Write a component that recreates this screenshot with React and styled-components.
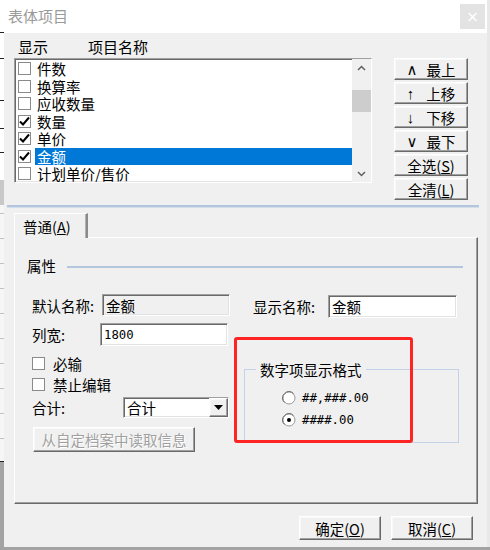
import React from 'react';
import styled, { createGlobalStyle } from 'styled-components';

const GlobalStyle = createGlobalStyle`
  html, body {
    margin: 0;
    padding: 0;
    background: #a3a3a3;
  }
  * {
    box-sizing: border-box;
  }
`;

const cjk = `"Noto Sans CJK SC", "Noto Sans", sans-serif`;
const mono = `"DejaVu Sans Mono", "Liberation Mono", monospace`;

const raised = `
  border: 1px solid;
  border-color: #ffffff #696969 #696969 #ffffff;
  box-shadow: inset -1px -1px 0 #a0a0a0, inset 1px 1px 0 #f8f8f8;
  background: #f0f0f0;
`;

const sunken = `
  border: 1px solid;
  border-color: #a0a0a0 #ffffff #ffffff #a0a0a0;
  box-shadow: inset 1px 1px 0 #696969, inset -1px -1px 0 #e3e3e3;
`;

const Page = styled.div`
  width: 490px;
  height: 550px;
  display: flex;
  align-items: flex-start;
  overflow: hidden;
  background: #a3a3a3;
  font-family: ${cjk};
  font-size: 14.5px;
  color: #000;
`;

// sliver of the window behind the dialog
const BackStrip = styled.div`
  width: 4px;
  height: 462px;
  flex: none;
  background:
    linear-gradient(#fff 0 32px, #222 32px 33px, #fff 33px 58px, #222 58px 59px,
      #fff 59px 100px, #222 100px 101px, #fff 101px 128px, #222 128px 129px,
      #fff 129px 152px, #222 152px 153px, #fff 153px 180px, #c8c8c8 180px 205px, transparent 205px),
    repeating-linear-gradient(#f6f6f6 0 13px, #b9c6bd 13px 14px, #f6f6f6 14px 25px);
  border-bottom: 1px solid #222;
`;

const Dialog = styled.div`
  width: 486px;
  height: 547px;
  flex: none;
  display: flex;
  flex-direction: column;
  background: #f0f0f0;
  border-right: 3px solid #e8e8e8;
`;

const TitleBar = styled.div`
  height: 33px;
  flex: none;
  display: flex;
  align-items: flex-start;
  justify-content: space-between;
  background: #ffffff;
`;

const TitleText = styled.div`
  padding-left: 4px;
  line-height: 31px;
  font-size: 15px;
  color: #9a9a9a;
`;

const CloseButton = styled.div`
  width: 25px;
  height: 25px;
  margin: 4px 2px 0 0;
  display: flex;
  align-items: center;
  justify-content: center;
  background: #e3e3e3;
  color: #ffffff;
  font-family: "DejaVu Sans", sans-serif;
  font-size: 15px;
`;

const TopSection = styled.div`
  display: flex;
  gap: 22px;
  padding-left: 10px;
`;

const ListColumn = styled.div`
  width: 358px;
`;

const ListHeader = styled.div`
  height: 25px;
  display: flex;
  align-items: flex-end;
  gap: 40px;
  padding: 0 0 3px 4px;
  font-size: 15px;
  line-height: 17px;
`;

const ListBox = styled.div`
  height: 125px;
  display: flex;
  background: #ffffff;
  overflow: hidden;
  ${sunken}
`;

const Rows = styled.div`
  flex: 1;
  padding-top: 1px;
  display: flex;
  flex-direction: column;
  overflow: hidden;
`;

const Row = styled.div`
  height: 17.5px;
  flex: none;
  display: flex;
  align-items: center;
  padding-left: 3px;
`;

const CheckBox = styled.div`
  width: 13px;
  height: 13px;
  flex: none;
  display: flex;
  align-items: center;
  justify-content: center;
  background: #ffffff;
  border: 1px solid #8a8a8a;
`;

const RowLabel = styled.div`
  flex: 1;
  margin-left: 4px;
  padding-left: 2px;
  line-height: 17px;
  height: 17px;
  white-space: nowrap;
  background: ${(p) => (p.$selected ? '#0078d7' : 'transparent')};
  color: ${(p) => (p.$selected ? '#ffffff' : '#000000')};
`;

const ScrollBar = styled.div`
  width: 19px;
  flex: none;
  display: flex;
  flex-direction: column;
  background: #f0f0f0;
`;

const ScrollArrow = styled.div`
  height: 17px;
  display: flex;
  align-items: center;
  justify-content: center;
`;

const Thumb = styled.div`
  height: 22px;
  margin: 14px 0 0 0;
  background: #cdcdcd;
`;

const Spacer = styled.div`
  flex: 1;
`;

const ButtonColumn = styled.div`
  width: 74px;
  padding-top: 25px;
  display: flex;
  flex-direction: column;
  gap: 2px;
`;

const SideButton = styled.div`
  height: 22px;
  display: flex;
  align-items: center;
  justify-content: center;
  gap: ${(p) => p.$gap || 0}px;
  font-size: 14.5px;
  ${raised}
`;

const Glyph = styled.span`
  font-family: "Liberation Sans", "DejaVu Sans", sans-serif;
  font-size: 15px;
  line-height: 1;
`;

const Separator = styled.div`
  height: 2px;
  margin: 5px 8px 0 3px;
  background: #b4c6de;
  border-bottom: 1px solid #d4dfec;
  box-sizing: content-box;
`;

const TabStrip = styled.div`
  margin-top: 5px;
  padding-left: 10px;
  display: flex;
  position: relative;
  z-index: 1;
`;

const Tab = styled.div`
  width: 74px;
  height: 25px;
  margin-bottom: -1px;
  padding-left: 8px;
  display: flex;
  align-items: center;
  background: #f0f0f0;
  border-top: 1px solid #ffffff;
  border-left: 1px solid #ffffff;
  border-right: 2px solid #8a8a8a;
  box-shadow: inset -1px 0 0 #b0b0b0;
`;

const Panel = styled.div`
  position: relative;
  width: 464px;
  height: 267px;
  margin-left: 10px;
  border-top: 1px solid #ffffff;
  border-left: 1px solid #ffffff;
  border-right: 1px solid #696969;
  border-bottom: 1px solid #696969;
  box-shadow: inset -1px -1px 0 #a0a0a0;
`;

const SectionHeader = styled.div`
  display: flex;
  align-items: center;
  margin: 19px 14px 0 12px;
  line-height: 17px;
`;

const SectionLine = styled.div`
  flex: 1;
  height: 2px;
  margin-left: 11px;
  margin-top: 3px;
  background: #b4c6de;
`;

const Columns = styled.div`
  display: flex;
  padding-left: 17px;
  margin-top: 20px;
`;

const LeftCol = styled.div`
  width: 198px;
  display: flex;
  flex-direction: column;
`;

const RightCol = styled.div`
  width: 215px;
  margin-left: 14px;
  display: flex;
  flex-direction: column;
`;

const FieldRow = styled.div`
  display: flex;
  align-items: center;
  height: ${(p) => p.$h || 22}px;
  margin-top: ${(p) => p.$mt || 0}px;
`;

const FieldLabel = styled.div`
  width: ${(p) => p.$w}px;
  padding-left: ${(p) => p.$pl || 0}px;
  flex: none;
  white-space: nowrap;
`;

const TextInput = styled.div`
  width: ${(p) => p.$w || 128}px;
  height: 100%;
  padding-left: 3px;
  display: flex;
  align-items: center;
  background: ${(p) => (p.$readOnly ? '#f0f0f0' : '#ffffff')};
  font-family: ${(p) => (p.$mono ? mono : cjk)};
  font-size: ${(p) => (p.$mono ? '12.3px' : '14.5px')};
  ${sunken}
`;

const CheckRow = styled.div`
  display: flex;
  align-items: center;
  height: 13px;
  gap: 8px;
  margin-top: ${(p) => p.$mt}px;
`;

const SelectBox = styled.div`
  width: 106px;
  height: 100%;
  display: flex;
  background: #ffffff;
  ${sunken}
`;

const SelectValue = styled.div`
  flex: 1;
  padding-left: 3px;
  display: flex;
  align-items: center;
`;

const SelectButton = styled.div`
  width: 19px;
  display: flex;
  align-items: center;
  justify-content: center;
  ${raised}
`;

const DisabledButton = styled.div`
  width: 162px;
  height: 25px;
  margin: 9px 0 0 1px;
  display: flex;
  align-items: center;
  justify-content: center;
  color: #a0a0a0;
  text-shadow: 1px 1px 0 #ffffff;
  ${raised}
`;

const Group = styled.fieldset`
  margin: 43px 0 0 0;
  padding: 0 0 15px 0;
  border: 1px solid #c3d2e6;
  min-width: 0;
`;

const Legend = styled.legend`
  margin-left: 11px;
  padding: 0 4px;
  line-height: 17px;
`;

const RadioRow = styled.div`
  display: flex;
  align-items: center;
  gap: 6px;
  height: 14px;
  margin: ${(p) => p.$mt}px 0 0 37px;
  font-family: ${mono};
  font-size: 12.3px;
`;

const Highlight = styled.div`
  position: absolute;
  left: 219px;
  top: 99px;
  width: 179px;
  height: 106px;
  border: 3px solid #ff2424;
  border-radius: 3px;
  pointer-events: none;
`;

const Footer = styled.div`
  display: flex;
  justify-content: flex-end;
  gap: 10px;
  margin-top: 12px;
  padding-right: 14px;
`;

const FooterButton = styled.div`
  width: 82px;
  height: 24px;
  display: flex;
  align-items: center;
  justify-content: center;
  ${raised}
`;

const Check = () => (
  <svg width="11" height="11" viewBox="0 0 11 11">
    <path d="M1 5.5 L4 8.5 L10 1.5" fill="none" stroke="#000" strokeWidth="2" />
  </svg>
);

const Chevron = ({ down }) => (
  <svg width="9" height="6" viewBox="0 0 9 6">
    <path
      d={down ? 'M1 1 L4.5 4.5 L8 1' : 'M1 5 L4.5 1.5 L8 5'}
      fill="none"
      stroke="#606060"
      strokeWidth="1.5"
    />
  </svg>
);

const Radio = ({ checked }) => (
  <svg width="14" height="14" viewBox="0 0 14 14">
    <circle cx="7" cy="7" r="6" fill="#fff" stroke="#9a9a9a" />
    <path d="M2.5 11.5 A6 6 0 0 1 2.5 2.5 A6 6 0 0 1 11.5 2.5" fill="none" stroke="#707070" />
    {checked && <circle cx="7" cy="7" r="2" fill="#000" />}
  </svg>
);

const items = [
  { name: '件数', on: false },
  { name: '换算率', on: false },
  { name: '应收数量', on: false },
  { name: '数量', on: true },
  { name: '单价', on: true },
  { name: '金额', on: true, selected: true },
  { name: '计划单价/售价', on: false },
];

export default function App() {
  return (
    <Page>
      <GlobalStyle />
      <BackStrip />
      <Dialog>
        <TitleBar>
          <TitleText>表体项目</TitleText>
          <CloseButton>×</CloseButton>
        </TitleBar>

        <TopSection>
          <ListColumn>
            <ListHeader>
              <span>显示</span>
              <span>项目名称</span>
            </ListHeader>
            <ListBox>
              <Rows>
                {items.map((it) => (
                  <Row key={it.name}>
                    <CheckBox>{it.on && <Check />}</CheckBox>
                    <RowLabel $selected={it.selected}>{it.name}</RowLabel>
                  </Row>
                ))}
              </Rows>
              <ScrollBar>
                <ScrollArrow>
                  <Chevron />
                </ScrollArrow>
                <Thumb />
                <Spacer />
                <ScrollArrow>
                  <Chevron down />
                </ScrollArrow>
              </ScrollBar>
            </ListBox>
          </ListColumn>

          <ButtonColumn>
            <SideButton $gap={9}>
              <Glyph>∧</Glyph>最上
            </SideButton>
            <SideButton $gap={12}>
              <Glyph>↑</Glyph>上移
            </SideButton>
            <SideButton $gap={12}>
              <Glyph>↓</Glyph>下移
            </SideButton>
            <SideButton $gap={9}>
              <Glyph>∨</Glyph>最下
            </SideButton>
            <SideButton>
              全选(<u>S</u>)
            </SideButton>
            <SideButton>
              全清(<u>L</u>)
            </SideButton>
          </ButtonColumn>
        </TopSection>

        <Separator />

        <TabStrip>
          <Tab>
            普通(<u>A</u>)
          </Tab>
        </TabStrip>
        <Panel>
          <SectionHeader>
            属性
            <SectionLine />
          </SectionHeader>
          <Columns>
            <LeftCol>
              <FieldRow $h={22}>
                <FieldLabel $w={70}>默认名称:</FieldLabel>
                <TextInput $readOnly>金额</TextInput>
              </FieldRow>
              <FieldRow $h={23} $mt={7}>
                <FieldLabel $w={68}>列宽:</FieldLabel>
                <TextInput $mono>1800</TextInput>
              </FieldRow>
              <CheckRow $mt={11}>
                <CheckBox />
                必输
              </CheckRow>
              <CheckRow $mt={8}>
                <CheckBox />
                禁止编辑
              </CheckRow>
              <FieldRow $h={21} $mt={6}>
                <FieldLabel $w={91}>合计:</FieldLabel>
                <SelectBox>
                  <SelectValue>合计</SelectValue>
                  <SelectButton>
                    <svg width="9" height="5" viewBox="0 0 9 5">
                      <path d="M0 0 H9 L4.5 5 Z" fill="#000" />
                    </svg>
                  </SelectButton>
                </SelectBox>
              </FieldRow>
              <DisabledButton>从自定档案中读取信息</DisabledButton>
            </LeftCol>

            <RightCol>
              <FieldRow $h={23} $mt={1}>
                <FieldLabel $w={84} $pl={9}>
                  显示名称:
                </FieldLabel>
                <TextInput $w={129}>金额</TextInput>
              </FieldRow>
              <Group>
                <Legend>数字项显示格式</Legend>
                <RadioRow $mt={13}>
                  <Radio />
                  ##,###.00
                </RadioRow>
                <RadioRow $mt={8}>
                  <Radio checked />
                  ####.00
                </RadioRow>
              </Group>
            </RightCol>
          </Columns>
          <Highlight />
        </Panel>

        <Footer>
          <FooterButton>
            确定(<u>O</u>)
          </FooterButton>
          <FooterButton>
            取消(<u>C</u>)
          </FooterButton>
        </Footer>
      </Dialog>
    </Page>
  );
}
